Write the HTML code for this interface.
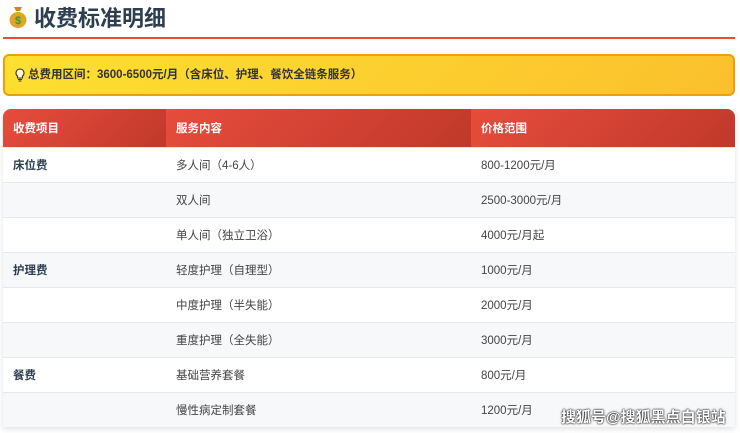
<!DOCTYPE html><html><head><meta charset="utf-8"><style>
body{margin:0;background:#fff;width:740px;height:433px;overflow:hidden;font-family:"Liberation Sans","Noto Sans CJK SC",sans-serif;position:relative}
.t{position:absolute;left:8px;top:2px;height:30px;display:flex;align-items:center;font-size:22px;font-weight:bold;color:#2c3e50}
.line{position:absolute;left:3px;top:37px;width:732px;height:2px;background:#e74c3c}
.y{position:absolute;left:3px;top:54px;width:728px;height:38px;border:2px solid #f39c12;border-radius:6px;background:linear-gradient(135deg,#fde030,#fbc02d);font-size:11.5px;font-weight:bold;color:#333;line-height:38px;display:flex;align-items:center}
.y svg{margin-left:10px;margin-right:3px}
table{position:absolute;left:3px;top:109px;width:732px;border-collapse:collapse;font-size:11.5px;color:#444;border-radius:8px 8px 0 0;overflow:hidden;box-shadow:0 2px 6px rgba(0,0,0,.12)}
th{height:38px;text-align:left;padding:0 10px;color:#fff;font-weight:bold;background:linear-gradient(135deg,#e74c3c,#c0392b)}
td{height:34px;padding:0 10px;border-top:1px solid #e5e8ec;background:#fff}
tr:nth-child(odd) td{background:#f7f8fa}
td.b{font-weight:bold;color:#2c3e50}
.wm{position:absolute;left:561px;top:406px;font-size:15px;color:#fff;font-weight:bold;text-shadow:0 0 2px #000,0 0 1px #000}
</style></head><body>
<div class="t"><svg width="20" height="24" viewBox="0 0 20 24" style="margin-right:6px"><path d="M6 2h8l-2 4h-4z" fill="#c8891a"/><ellipse cx="10" cy="15" rx="8.5" ry="8" fill="#e0a526"/><text x="10" y="19" font-size="11" text-anchor="middle" fill="#2e9e3e" font-weight="bold">$</text></svg>收费标准明细</div>
<div class="line"></div>
<div class="y"><svg width="10" height="14" viewBox="0 0 10 14"><path d="M5 1a4 4 0 0 0-2.5 7.1V10h5V8.1A4 4 0 0 0 5 1z" fill="#fff6c0" stroke="#333" stroke-width="1.1"/><path d="M3 11.5h4M3.6 13h2.8" stroke="#333" stroke-width="1.1"/></svg>总费用区间：3600-6500元/月（含床位、护理、餐饮全链条服务）</div>
<table>
<tr><th style="width:143px">收费项目</th><th style="width:285px">服务内容</th><th>价格范围</th></tr>
<tr><td class="b">床位费</td><td>多人间（4-6人）</td><td>800-1200元/月</td></tr>
<tr><td></td><td>双人间</td><td>2500-3000元/月</td></tr>
<tr><td></td><td>单人间（独立卫浴）</td><td>4000元/月起</td></tr>
<tr><td class="b">护理费</td><td>轻度护理（自理型）</td><td>1000元/月</td></tr>
<tr><td></td><td>中度护理（半失能）</td><td>2000元/月</td></tr>
<tr><td></td><td>重度护理（全失能）</td><td>3000元/月</td></tr>
<tr><td class="b">餐费</td><td>基础营养套餐</td><td>800元/月</td></tr>
<tr><td></td><td>慢性病定制套餐</td><td>1200元/月</td></tr>
</table>
<div class="wm">搜狐号@搜狐黑点白银站</div>
</body></html>
